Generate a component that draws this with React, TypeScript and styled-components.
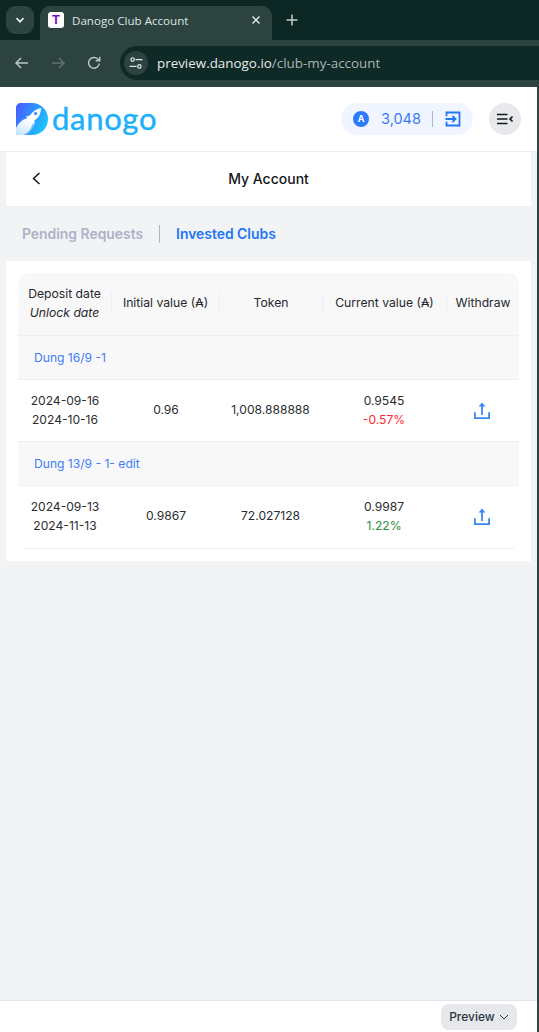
import React from 'react';
import styled, { createGlobalStyle } from 'styled-components';

const GlobalStyle = createGlobalStyle`
  html, body {
    margin: 0;
    padding: 0;
    background: #0f2926;
  }
  * { box-sizing: border-box; }
`;

const Window = styled.div`
  width: 539px;
  height: 1032px;
  display: flex;
  flex-direction: column;
  overflow: hidden;
  background: #2c4340;
  font-family: 'Inter', sans-serif;
`;

/* browser chrome */
const TabStrip = styled.div`
  height: 40px;
  flex: none;
  display: flex;
  align-items: flex-end;
  background: #0c2624;
  padding-left: 6px;
`;

const TabSearch = styled.div`
  width: 28px;
  height: 28px;
  margin-bottom: 6px;
  margin-right: 6px;
  border-radius: 9px;
  background: #2c4340;
  display: flex;
  align-items: center;
  justify-content: center;
`;

const Tab = styled.div`
  width: 232px;
  height: 34px;
  border-radius: 10px 10px 0 0;
  background: #2c4340;
  display: flex;
  align-items: center;
  padding: 0 11px 6px 8px;
  color: #dfe5e3;
  font: 11.6px 'Open Sans', sans-serif;
`;

const Favicon = styled.div`
  width: 16px;
  height: 16px;
  border-radius: 3px;
  background: #fff;
  color: #7a12b8;
  font: 700 13px/16px 'Liberation Sans', sans-serif;
  text-align: center;
  margin-right: 8px;
`;

const TabTitle = styled.span`
  flex: 1;
`;

const NewTab = styled.div`
  width: 28px;
  height: 34px;
  margin-left: 6px;
  display: flex;
  align-items: center;
  justify-content: center;
  padding-bottom: 6px;
`;

const Toolbar = styled.div`
  height: 47px;
  flex: none;
  display: flex;
  align-items: center;
  padding: 0 0 1px 13px;
  gap: 18px;
  background: #2c4340;
`;

const NavIcon = styled.svg`
  width: 18px;
  height: 18px;
  flex: none;
`;

const AddressBar = styled.div`
  flex: 1;
  height: 34px;
  margin-left: -1px;
  border-radius: 17px 0 0 17px;
  background: #0f2926;
  display: flex;
  align-items: center;
  padding-left: 4px;
  font: 13.4px 'Open Sans', sans-serif;
  color: #e6ecea;
`;

const SiteInfo = styled.div`
  width: 24px;
  height: 24px;
  border-radius: 50%;
  background: #2c4340;
  display: flex;
  align-items: center;
  justify-content: center;
  margin-right: 9px;
`;

const UrlPath = styled.span`
  color: #a9b6b3;
`;

/* page */
const Page = styled.div`
  flex: 1;
  width: 537px;
  display: flex;
  flex-direction: column;
  background: #f2f3f5;
`;

const Header = styled.header`
  height: 65px;
  flex: none;
  display: flex;
  align-items: center;
  padding: 0 16px 1px;
  background: #fff;
  border-bottom: 1px solid #eceef1;
`;

const Logo = styled.div`
  display: flex;
  align-items: center;
  gap: 4px;
  margin-right: auto;
`;

const LogoText = styled.span`
  font: 400 31px/32px 'Lato', sans-serif;
  letter-spacing: 0.7px;
  color: #1ab0fb;
  -webkit-text-stroke: 0.4px #1ab0fb;
  margin-top: -1px;
`;

const Balance = styled.div`
  width: 132px;
  height: 32px;
  margin-right: 16px;
  border-radius: 16px;
  background: #f0f5ff;
  display: flex;
  align-items: center;
  padding-left: 12px;
  color: #3a7bf6;
  font-size: 14.5px;
`;

const Coin = styled.div`
  width: 16px;
  height: 16px;
  border-radius: 50%;
  background: #2c7bff;
  color: #fff;
  font-size: 9px;
  font-weight: 700;
  line-height: 16px;
  text-align: center;
  margin-right: 12px;
`;

const BalanceDivider = styled.div`
  width: 1px;
  height: 16px;
  background: #a9b5cc;
  margin: 0 12px 0 11px;
`;

const MenuButton = styled.div`
  width: 32px;
  height: 32px;
  border-radius: 50%;
  background: #e8e9ec;
  display: flex;
  align-items: center;
  justify-content: center;
`;

const TitleBar = styled.div`
  height: 55px;
  flex: none;
  margin: 0 6px;
  padding-bottom: 2px;
  background: #fff;
  border-bottom: 1px solid #eceef1;
  display: flex;
  align-items: center;
  justify-content: center;
  font-size: 14px;
  font-weight: 450;
  color: #14161a;
  position: relative;
`;

const BackIcon = styled.svg`
  position: absolute;
  left: 26px;
  top: 20px;
`;

const Tabs = styled.div`
  height: 54px;
  flex: none;
  display: flex;
  align-items: center;
  padding-left: 22px;
  font-size: 13.9px;
  font-weight: 600;
`;

const TabLabel = styled.span<{ $active?: boolean }>`
  color: ${(props) => (props.$active ? '#2176f5' : '#adb2c7')};
`;

const TabDivider = styled.div`
  width: 1px;
  height: 18px;
  background: #adb2c7;
  margin: 0 16px;
`;

const Card = styled.section`
  flex: none;
  margin: 0 6px;
  padding: 12px;
  background: #fff;
`;

const HeadRow = styled.div`
  display: grid;
  grid-template-columns: 94px 108px 103px 124px 72px;
  height: 63px;
  padding-bottom: 3px;
  align-items: center;
  border-radius: 10px 10px 0 0;
  background: #f8f8f9;
  border-bottom: 1px solid #eeeff1;
`;

const HeadCell = styled.div<{ $divider?: boolean }>`
  height: 20px;
  display: flex;
  flex-direction: column;
  align-items: center;
  justify-content: center;
  font-size: 12.2px;
  line-height: 19px;
  color: #26282c;
  white-space: nowrap;
  border-right: ${(props) => (props.$divider ? '1px solid #eceef0' : 'none')};
`;

const Italic = styled.span`
  font-style: italic;
`;

const GroupRow = styled.div`
  height: 44px;
  display: flex;
  align-items: center;
  padding-left: 16px;
  background: #f8f8f9;
  border-bottom: 1px solid #eeeff1;
  font-size: 12.1px;
  color: #3f7cf7;
`;

const DataRow = styled.div<{ $last?: boolean }>`
  display: grid;
  grid-template-columns: 94px 108px 101px 126px 72px;
  height: ${(props) => (props.$last ? '63px' : '62px')};
  padding-bottom: ${(props) => (props.$last ? '4px' : '2px')};
  align-items: center;
  position: relative;
  border-bottom: ${(props) => (props.$last ? 'none' : '1px solid #eeeff1')};
  &::after {
    content: ${(props) => (props.$last ? "''" : 'none')};
    position: absolute;
    left: 6px;
    right: 5px;
    bottom: 0;
    height: 1px;
    background: #eeeff1;
  }
`;

const DataCell = styled.div`
  display: flex;
  flex-direction: column;
  align-items: center;
  font-size: 12.1px;
  line-height: 19px;
  color: #2a2c30;
`;

const Change = styled.span<{ $up?: boolean }>`
  color: ${(props) => (props.$up ? '#2e8b3d' : '#ff2a2f')};
`;

const WithdrawIcon = styled.svg`
  margin-right: 2px;
`;

const Footer = styled.footer`
  height: 32px;
  flex: none;
  margin-top: auto;
  display: flex;
  align-items: center;
  justify-content: flex-end;
  padding-right: 20px;
  background: #fff;
  border-top: 1px solid #e3e3ef;
`;

const PreviewButton = styled.div`
  width: 76px;
  height: 26px;
  border-radius: 8px;
  background: #e7e8ec;
  display: flex;
  align-items: center;
  justify-content: center;
  gap: 4px;
  font-size: 12px;
  font-weight: 500;
  color: #2c3444;
`;

const UploadIcon = () => (
  <WithdrawIcon width="20" height="20" viewBox="0 0 20 20" fill="none" stroke="#3b86f7" strokeWidth="1.8">
    <path d="M10 15V5" />
    <path d="M10 2.4 13.4 6.6H6.6Z" fill="#3b86f7" stroke="none" />
    <path d="M2.9 12.2v5.9h14.2v-5.9" />
  </WithdrawIcon>
);

const LogoMark = () => (
  <svg width="32" height="32" viewBox="0 0 32 32">
    <defs>
      <linearGradient id="logoBg" x1="0" y1="0" x2="1" y2="0.5">
        <stop offset="0" stopColor="#4a56ff" />
        <stop offset="1" stopColor="#1cc2ff" />
      </linearGradient>
      <linearGradient id="logoSmoke" x1="0.6" y1="0" x2="0.2" y2="1">
        <stop offset="0" stopColor="#ffffff" />
        <stop offset="1" stopColor="#c6e6ff" />
      </linearGradient>
    </defs>
    <path d="M5 0h11c9 0 16 7 16 16s-7 16-16 16H3c-2 0-3-1-3-3V5c0-3 2-5 5-5Z" fill="url(#logoBg)" />
    <path d="M10 32 C15 28 18 24 19.5 19 L16 17 L10 32Z" fill="#7cc4ff" />
    <path d="M0 29V25c3-6 7-9 12-10l5 4c-1 5-4 10-9 13H3c-2 0-3-1-3-3Z" fill="url(#logoSmoke)" />
    <path d="M10 13.5l4-1c2.5-4 6-6.5 11-7.5 0 5.5-2 9.5-6.5 12.5l-1 4-2.5-2.5c-2 0-2.5-.5-2.5-2.5Z" fill="#fff" />
    <circle cx="19.6" cy="10.6" r="1.7" fill="#3d8dff" />
  </svg>
);

const App = () => {
  return (
    <Window>
      <GlobalStyle />
      <TabStrip>
        <TabSearch>
          <svg width="10" height="10" viewBox="0 0 10 10" fill="none" stroke="#e4eae8" strokeWidth="1.7">
            <path d="M1.5 3.2 5 6.7l3.5-3.5" />
          </svg>
        </TabSearch>
        <Tab>
          <Favicon>T</Favicon>
          <TabTitle>Danogo Club Account</TabTitle>
          <svg width="10" height="10" viewBox="0 0 10 10" stroke="#e4eae8" strokeWidth="1.4">
            <path d="M1.5 1.5l7 7M8.5 1.5l-7 7" />
          </svg>
        </Tab>
        <NewTab>
          <svg width="12" height="12" viewBox="0 0 12 12" stroke="#c5d0cd" strokeWidth="1.5">
            <path d="M6 .5v11M.5 6h11" />
          </svg>
        </NewTab>
      </TabStrip>
      <Toolbar>
        <NavIcon viewBox="0 0 18 18" fill="none" stroke="#b9c6c3" strokeWidth="1.5">
          <path d="M15 9H3.5M8 4 3 9l5 5" />
        </NavIcon>
        <NavIcon viewBox="0 0 18 18" fill="none" stroke="#61726f" strokeWidth="1.5">
          <path d="M3 9h11.5M10 4l5 5-5 5" />
        </NavIcon>
        <NavIcon viewBox="0 0 18 18" fill="none" stroke="#b9c6c3" strokeWidth="1.5">
          <path d="M14.3 9.5A5.4 5.4 0 1 1 12.8 5l1.7 1.6M14.7 2.8v4h-4" />
        </NavIcon>
        <AddressBar>
          <SiteInfo>
            <svg width="14" height="14" viewBox="0 0 14 14" fill="none" stroke="#dfe5e3" strokeWidth="1.2">
              <circle cx="3.6" cy="3.6" r="1.7" />
              <path d="M6.5 3.6H13.5M.5 10.4h7" />
              <circle cx="10.4" cy="10.4" r="1.7" />
            </svg>
          </SiteInfo>
          preview.danogo.io<UrlPath>/club-my-account</UrlPath>
        </AddressBar>
      </Toolbar>
      <Page>
        <Header>
          <Logo>
            <LogoMark />
            <LogoText>danogo</LogoText>
          </Logo>
          <Balance>
            <Coin>A</Coin>
            3,048
            <BalanceDivider />
            <svg width="16" height="16" viewBox="0 0 16 16" fill="none" stroke="#1f78f5" strokeWidth="1.8">
              <path d="M1.5 5.2V1.5h13v13h-13V10.8" />
              <path d="M.5 8h9M7.4 4.8 10.6 8l-3.2 3.2" />
            </svg>
          </Balance>
          <MenuButton>
            <svg width="16" height="12" viewBox="0 0 16 12" fill="none" stroke="#16181c" strokeWidth="1.6">
              <path d="M0 1.5h10.5M0 6h10.5M0 10.5h10.5M15.5 3.5 13 6l2.5 2.5" />
            </svg>
          </MenuButton>
        </Header>
        <TitleBar>
          <BackIcon width="9" height="13" viewBox="0 0 9 13" fill="none" stroke="#14161a" strokeWidth="1.5">
            <path d="M7.5 1 1.5 6.5l6 5.5" />
          </BackIcon>
          My Account
        </TitleBar>
        <Tabs>
          <TabLabel>Pending Requests</TabLabel>
          <TabDivider />
          <TabLabel $active>Invested Clubs</TabLabel>
        </Tabs>
        <Card>
          <HeadRow>
            <HeadCell $divider>
              <span>Deposit date</span>
              <Italic>Unlock date</Italic>
            </HeadCell>
            <HeadCell $divider>Initial value (₳)</HeadCell>
            <HeadCell $divider>Token</HeadCell>
            <HeadCell $divider>Current value (₳)</HeadCell>
            <HeadCell>Withdraw</HeadCell>
          </HeadRow>
          <GroupRow>Dung 16/9 -1</GroupRow>
          <DataRow>
            <DataCell>
              <span>2024-09-16</span>
              <span>2024-10-16</span>
            </DataCell>
            <DataCell>0.96</DataCell>
            <DataCell>1,008.888888</DataCell>
            <DataCell>
              <span>0.9545</span>
              <Change>-0.57%</Change>
            </DataCell>
            <DataCell>
              <UploadIcon />
            </DataCell>
          </DataRow>
          <GroupRow>Dung 13/9 - 1- edit</GroupRow>
          <DataRow $last>
            <DataCell>
              <span>2024-09-13</span>
              <span>2024-11-13</span>
            </DataCell>
            <DataCell>0.9867</DataCell>
            <DataCell>72.027128</DataCell>
            <DataCell>
              <span>0.9987</span>
              <Change $up>1.22%</Change>
            </DataCell>
            <DataCell>
              <UploadIcon />
            </DataCell>
          </DataRow>
        </Card>
        <Footer>
          <PreviewButton>
            Preview
            <svg width="10" height="10" viewBox="0 0 10 10" fill="none" stroke="#2c3444" strokeWidth="1">
              <path d="M1 3l4 4 4-4" />
            </svg>
          </PreviewButton>
        </Footer>
      </Page>
    </Window>
  );
};

export default App;
